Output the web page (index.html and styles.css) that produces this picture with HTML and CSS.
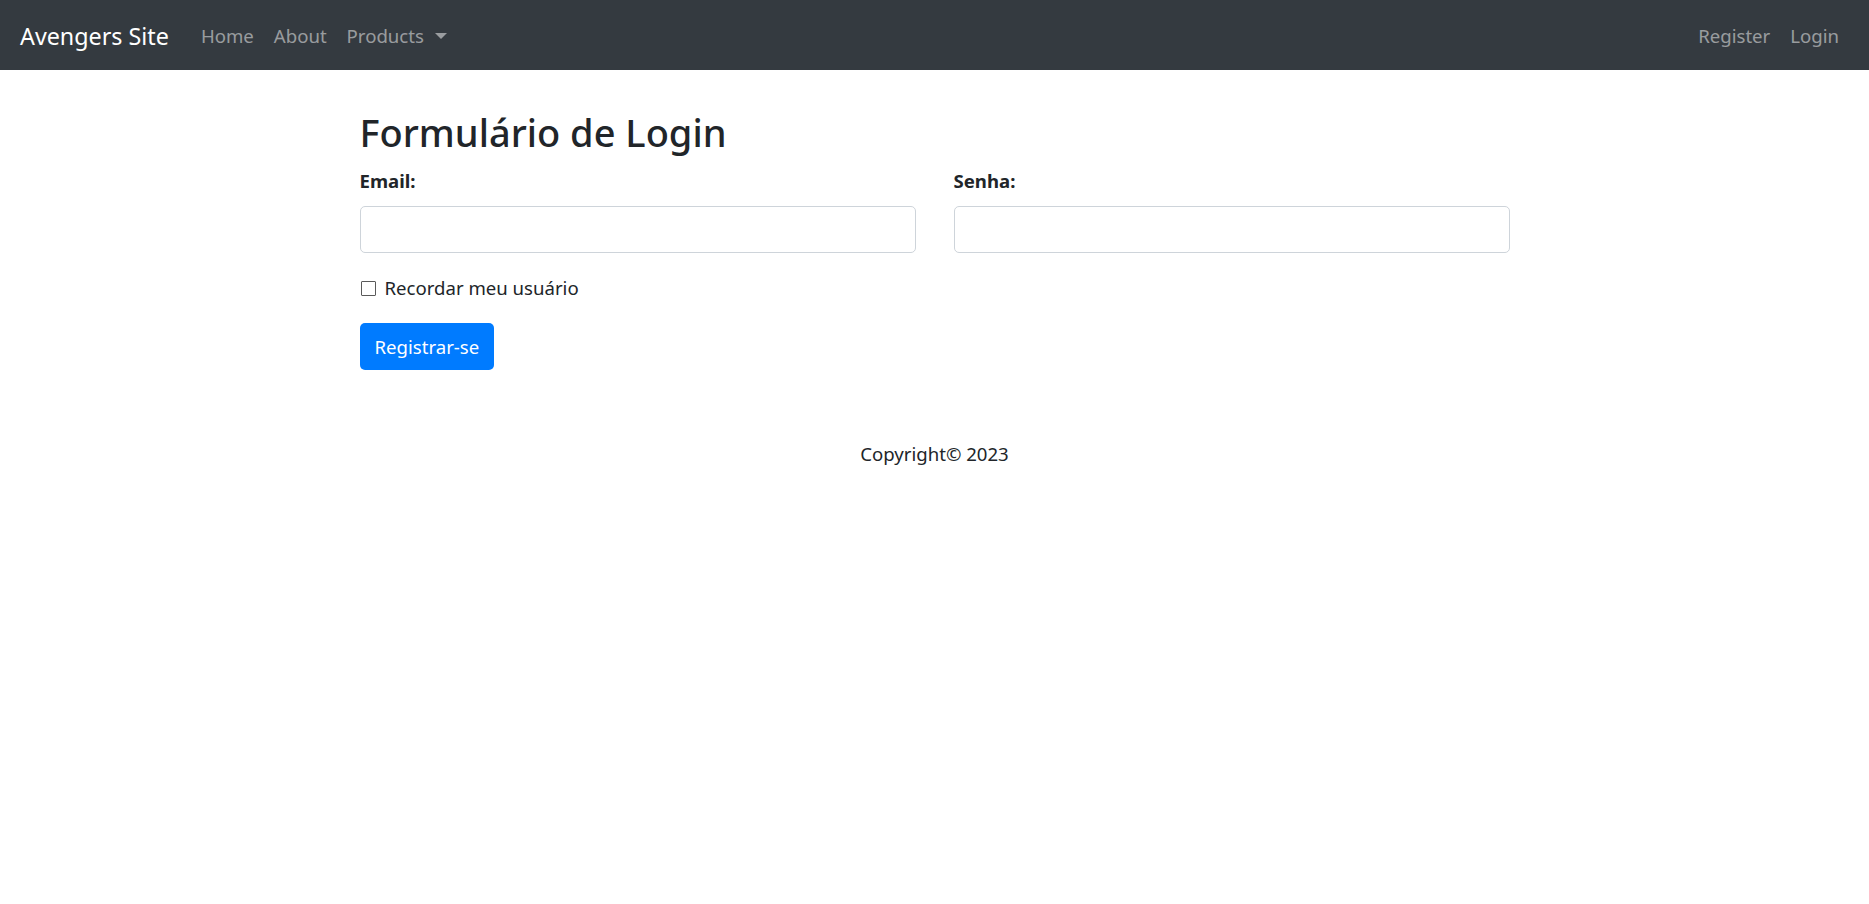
FILE: index.html
```html
<!DOCTYPE html>
<html lang="pt">
<head>
<meta charset="utf-8">
<title>Login</title>
<link rel="stylesheet" href="styles.css">
</head>
<body>
<nav class="navbar">
  <a class="brand" href="#">Avengers Site</a>
  <ul class="nav">
    <li><a href="#">Home</a></li>
    <li><a href="#">About</a></li>
    <li><a href="#" class="dropdown">Products<span class="caret"></span></a></li>
  </ul>
  <ul class="nav nav-right">
    <li><a href="#">Register</a></li>
    <li><a href="#">Login</a></li>
  </ul>
</nav>
<main class="container">
  <h2 class="title">Formulário de Login</h2>
  <form class="form">
    <div class="row">
      <div class="field">
        <label class="label" for="email">Email:</label>
        <input class="input" id="email" type="email">
      </div>
      <div class="field">
        <label class="label" for="senha">Senha:</label>
        <input class="input" id="senha" type="password">
      </div>
    </div>
    <label class="check"><input type="checkbox" class="checkbox"> Recordar meu usuário</label>
    <button type="button" class="btn">Registrar-se</button>
  </form>
</main>
<footer class="footer">Copyright© 2023</footer>
</body>
</html>
```
FILE: styles.css
```css
* { box-sizing: border-box; }
html, body { margin: 0; padding: 0; }
body {
  font-family: "Noto Sans", "Open Sans", sans-serif;
  font-size: 18.6px;
  line-height: 30px;
  color: #212529;
  background: #fff;
}
a { text-decoration: none; }
.navbar {
  display: flex;
  align-items: center;
  height: 70px;
  padding: 2px 20px 0;
  background: #343a40;
}
.brand {
  color: #fff;
  font-size: 23.3px;
  margin-right: 22px;
  line-height: 37px;
}
.nav {
  display: flex;
  list-style: none;
  margin: 0;
  padding: 0;
}
.nav a {
  display: block;
  padding: 0 10px;
  color: rgba(255,255,255,.5);
  font-size: 18.6px;
}
.nav-right { margin-left: auto; }
.caret {
  display: inline-block;
  margin-left: 11px;
  vertical-align: 4px;
  border-top: 6px solid rgba(255,255,255,.5);
  border-left: 6px solid transparent;
  border-right: 6px solid transparent;
}
.container {
  width: 1150px;
  margin: 0 auto;
  padding-top: 38px;
}
.title {
  margin: 0 0 10px;
  font-size: 38px;
  font-weight: 500;
  line-height: 48px;
}
.row {
  display: flex;
  gap: 38px;
}
.field {
  flex: 1;
  display: flex;
  flex-direction: column;
  margin-bottom: 20px;
}
.label {
  font-weight: 700;
  margin-bottom: 10px;
}
.input {
  height: 47px;
  border: 1px solid #ced4da;
  border-radius: 5px;
  padding: 7px 15px;
  font: inherit;
}
.check {
  display: flex;
  align-items: center;
  gap: 9px;
  margin-bottom: 20px;
}
.checkbox {
  appearance: none;
  -webkit-appearance: none;
  width: 15px;
  height: 15px;
  margin: 0 0 0 1px;
  border: 1.5px solid #5a5a5a;
  border-radius: 1px;
  background: #fff;
}
.btn {
  display: block;
  height: 47px;
  padding: 0 15px;
  border: 0;
  border-radius: 5px;
  background: #007bff;
  color: #fff;
  font: inherit;
}
.footer {
  text-align: center;
  margin-top: 69px;
}
```
